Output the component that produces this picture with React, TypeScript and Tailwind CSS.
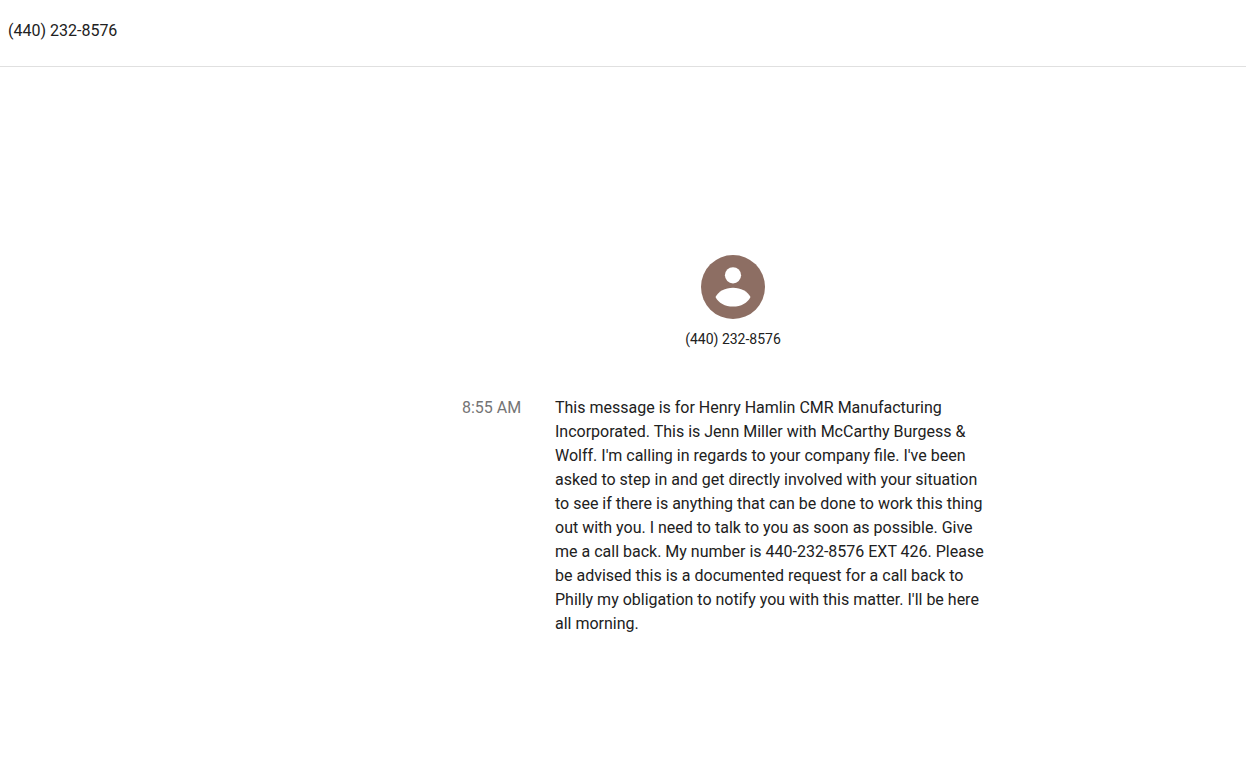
/**
 * Voicemail — contact header, caller avatar and the message transcript.
 */

interface Voicemail {
  caller: string
  time: string
  transcript: string
}

const voicemail: Voicemail = {
  caller: '(440) 232-8576',
  time: '8:55 AM',
  transcript:
    "This message is for Henry Hamlin CMR Manufacturing Incorporated. This is Jenn Miller with McCarthy Burgess & Wolff. I'm calling in regards to your company file. I've been asked to step in and get directly involved with your situation to see if there is anything that can be done to work this thing out with you. I need to talk to you as soon as possible. Give me a call back. My number is 440-232-8576 EXT 426. Please be advised this is a documented request for a call back to Philly my obligation to notify you with this matter. I'll be here all morning.",
}

function Avatar() {
  return (
    <svg viewBox="0 0 64 64" className="size-16" aria-hidden="true">
      <circle cx="32" cy="32" r="32" fill="#8d6e63" />
      <circle cx="32" cy="20.300" r="8.100" fill="#fff" />
      <path
        d="M14.500 42C17.500 36.500 24 32.800 32 32.800S46.500 36.500 49.500 42C46.500 48 40 51.600 32 51.600S17.500 48 14.500 42Z"
        fill="#fff"
      />
    </svg>
  )
}

export default function App() {
  const { caller, time, transcript } = voicemail

  return (
    <div className="min-h-screen bg-white font-[Roboto,sans-serif] text-base text-[#212121]">
      {/* Header */}
      <header className="border-b border-[#e0e0e0] px-2 pt-[19px] pb-[23px]">
        <h1>{caller}</h1>
      </header>

      <main className="pt-[188px] pl-[220px]">
        {/* Caller */}
        <div className="flex flex-col items-center gap-2.5">
          <Avatar />
          <p className="text-sm">{caller}</p>
        </div>

        {/* Transcript */}
        <div className="mx-auto mt-[47px] flex w-full max-w-[542px] gap-8">
          <time className="w-[61px] shrink-0 text-[#757575]">{time}</time>
          <p className="max-w-[436px] flex-1">{transcript}</p>
        </div>
      </main>
    </div>
  )
}
